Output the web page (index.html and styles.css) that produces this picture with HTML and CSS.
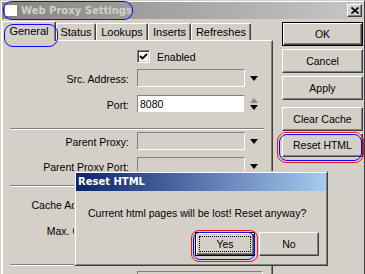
FILE: index.html
```html
<!DOCTYPE html>
<html lang="en">
<head>
    <meta charset="UTF-8">
    <meta name="viewport" content="width=device-width, initial-scale=1.0">
    <title>Web Proxy Settings</title>
    <link rel="stylesheet" href="styles.css">
</head>
<body>
    <div class="window">
        <div class="titlebar">
            <span class="app-icon"></span>
            <span class="title">Web Proxy Settings</span>
            <span class="mark blue mark-title"></span>
            <button class="close-btn">
                <svg width="8" height="7" viewBox="0 0 8 7"><path d="M0.5 0.5L7.5 6.5M7.5 0.5L0.5 6.5" stroke="#000" stroke-width="1.6"/></svg>
            </button>
        </div>

        <div class="main">
            <div class="tabs-area">
                <div class="tabs">
                    <div class="tab active">General<span class="mark blue mark-tab"></span></div>
                    <div class="tab tab-status">Status</div>
                    <div class="tab tab-lookups">Lookups</div>
                    <div class="tab tab-inserts">Inserts</div>
                    <div class="tab tab-refreshes">Refreshes</div>
                </div>

                <div class="panel">
                    <div class="row check-row">
                        <span class="checkbox">
                            <svg width="9" height="9" viewBox="0 0 9 9"><polyline points="1,4 3.5,6.5 8,2" fill="none" stroke="#000" stroke-width="1.8"/></svg>
                        </span>
                        <span class="check-label">Enabled</span>
                    </div>
                    <div class="row r-src">
                        <label>Src. Address:</label>
                        <div class="field"></div>
                        <span class="arrow"></span>
                    </div>
                    <div class="row r-port">
                        <label>Port:</label>
                        <div class="field white">8080</div>
                        <span class="spin"><span class="arrow up"></span><span class="arrow"></span></span>
                    </div>
                    <div class="sep s1"></div>
                    <div class="row r-parent">
                        <label>Parent Proxy:</label>
                        <div class="field"></div>
                        <span class="arrow"></span>
                    </div>
                    <div class="row r-pport">
                        <label>Parent Proxy Port:</label>
                        <div class="field"></div>
                        <span class="arrow"></span>
                    </div>
                    <div class="sep s2"></div>
                    <div class="row r-admin">
                        <label>Cache Administrator:</label>
                        <div class="field"></div>
                    </div>
                    <div class="row r-max">
                        <label>Max. Object Size:</label>
                        <div class="field"></div>
                        <span class="arrow"></span>
                    </div>
                    <div class="sep s3"></div>
                    <div class="row r-last">
                        <label></label>
                        <div class="field wide"></div>
                    </div>
                </div>
            </div>

            <div class="buttons">
                <button class="btn default b-ok">OK</button>
                <button class="btn b-cancel">Cancel</button>
                <button class="btn b-apply">Apply</button>
                <button class="btn b-clear">Clear Cache</button>
                <button class="btn b-reset">Reset HTML<span class="mark red mark-reset-r"></span><span class="mark blue mark-reset-b"></span></button>
            </div>
        </div>

        <div class="dialog">
            <div class="dialog-title">Reset HTML</div>
            <div class="dialog-msg">Current html pages will be lost! Reset anyway?</div>
            <div class="dialog-buttons">
                <button class="btn default focus d-btn">Yes<span class="mark red mark-yes-r"></span><span class="mark blue mark-yes-b"></span></button>
                <button class="btn d-btn">No</button>
            </div>
        </div>
    </div>
</body>
</html>
```

FILE: styles.css
```css
body {
    margin: 0;
    width: 365px;
    height: 274px;
    overflow: hidden;
    font-family: 'Liberation Sans', Arial, sans-serif;
    font-size: 10.5px;
    color: #000;
    background-color: #d4d0c8;
}

.window {
    position: relative;
    box-sizing: border-box;
    width: 365px;
    height: 274px;
    overflow: hidden;
    background-color: #d4d0c8;
    border: 1px solid #d4d0c8;
    border-right-color: #404040;
    border-bottom: none;
    box-shadow: inset 1px 1px #fff;
    padding: 1px 0 0 1px;
}

/* title bar */
.titlebar {
    position: relative;
    display: flex;
    align-items: center;
    height: 17px;
    width: 361px;
    background: linear-gradient(to right, #858585, #c6c6c6);
}

.app-icon {
    width: 12px;
    height: 11px;
    margin-left: 3px;
    background-color: #fff;
    border-right: 1px solid #808080;
    border-bottom: 1px solid #808080;
}

.title {
    margin-left: 3px;
    font-family: 'DejaVu Sans', Verdana, sans-serif;
    font-weight: bold;
    font-size: 10px;
    color: #d4d0c8;
}

.close-btn {
    display: flex;
    align-items: center;
    justify-content: center;
    width: 15px;
    height: 13px;
    margin-left: auto;
    margin-right: 1px;
    padding: 0;
    background-color: #d4d0c8;
    border: 1px solid;
    border-color: #fff #404040 #404040 #fff;
    box-shadow: inset -1px -1px #808080;
}

/* annotation rings */
.mark {
    position: absolute;
    box-sizing: border-box;
    pointer-events: none;
}

.mark.blue {
    border: 1px solid #0a0aff;
}

.mark.red {
    border: 1px solid #ff1010;
}

.mark-title {
    left: 1px;
    top: -1px;
    width: 130px;
    height: 19px;
    border-radius: 9px;
}

.mark-tab {
    left: 1px;
    top: 2px;
    width: 54px;
    height: 23px;
    border-radius: 9px;
}

.mark-reset-r {
    left: -6px;
    top: -2px;
    width: 87px;
    height: 31px;
    border-radius: 9px;
}

.mark-reset-b {
    left: -4px;
    top: 0;
    width: 83px;
    height: 27px;
    border-radius: 8px;
}

.mark-yes-r {
    left: -5px;
    top: -3px;
    width: 67px;
    height: 32px;
    border-radius: 8px;
}

.mark-yes-b {
    left: -3px;
    top: -1px;
    width: 62px;
    height: 28px;
    border-radius: 7px;
}

/* main area */
.main {
    display: flex;
}

.tabs-area {
    width: 271px;
}

.tabs {
    display: flex;
    align-items: flex-end;
    height: 21px;
}

.tab {
    box-sizing: border-box;
    height: 17px;
    font-size: 11px;
    line-height: 16px;
    text-align: center;
    border-top: 1px solid #fff;
    border-left: 1px solid #fff;
    border-right: 1px solid #404040;
    box-shadow: inset -1px 0 #808080;
    border-radius: 2px 2px 0 0;
}

.tab.active {
    position: relative;
    z-index: 1;
    width: 54px;
    height: 20px;
    margin-bottom: -1px;
    line-height: 18px;
    background-color: #d4d0c8;
}

.tab-status {
    width: 40px;
}

.tab-lookups {
    width: 52px;
}

.tab-inserts {
    width: 43px;
}

.tab-refreshes {
    width: 60px;
}

.panel {
    box-sizing: border-box;
    height: 260px;
    border-top: 1px solid #fff;
    border-left: 1px solid #fff;
    border-right: 1px solid #404040;
    box-shadow: inset -1px 0 #808080;
}

.row {
    display: flex;
    align-items: center;
    height: 18px;
}

.row label {
    width: 126px;
    margin-right: 8px;
    padding-top: 1px;
    text-align: right;
    white-space: nowrap;
}

.field {
    box-sizing: border-box;
    width: 108px;
    height: 18px;
    padding: 1px 0 0 2px;
    line-height: 15px;
    background-color: #d4d0c8;
    border: 1px solid;
    border-color: #808080 #fff #fff #808080;
}

.field.white {
    background-color: #fff;
    border-right-color: #d4d0c8;
    border-bottom-color: #d4d0c8;
}

.field.wide {
    width: 126px;
}

.arrow {
    width: 0;
    height: 0;
    margin-left: 5px;
    border-left: 4.5px solid transparent;
    border-right: 4.5px solid transparent;
    border-top: 5px solid #000;
}

.arrow.up {
    border-top: none;
    border-bottom: 5px solid #8c8c8c;
}

.spin {
    display: flex;
    flex-direction: column;
    gap: 2px;
}

.check-row {
    height: 13px;
    margin-top: 9px;
}

.checkbox {
    box-sizing: border-box;
    display: flex;
    align-items: center;
    justify-content: center;
    width: 13px;
    height: 13px;
    margin-left: 134px;
    background-color: #fff;
    border: 1px solid;
    border-color: #808080 #fff #fff #808080;
    box-shadow: inset 1px 1px #404040, inset -1px -1px #d4d0c8;
}

.check-label {
    margin-left: 7px;
}

.r-src { margin-top: 6px; }
.r-port { margin-top: 8px; }
.r-parent { margin-top: 2px; }
.r-pport { margin-top: 7px; }
.r-admin { margin-top: 8px; }
.r-max { margin-top: 8px; }
.r-last { margin-top: 5px; }

.sep {
    height: 0;
    margin: 0 8px 0 7px;
    border-top: 1px solid #808080;
    border-bottom: 1px solid #fff;
}

.s1 { margin-top: 15px; }
.s2 { margin-top: 10px; }
.s3 { margin-top: 25px; }

/* buttons */
.buttons {
    display: flex;
    flex-direction: column;
    width: 81px;
    margin-left: 9px;
    padding-top: 3px;
}

.btn {
    position: relative;
    box-sizing: border-box;
    height: 24px;
    padding: 0;
    font-family: 'Liberation Sans', Arial, sans-serif;
    font-size: 10.5px;
    color: #000;
    background-color: #d4d0c8;
    border: 1px solid;
    border-color: #fff #404040 #404040 #fff;
    box-shadow: inset -1px -1px #808080;
}

.btn.default {
    border: 1px solid #000;
    box-shadow: inset 1px 1px #fff, inset -1px -1px #404040, inset -2px -2px #808080;
}

.btn.focus {
    outline: 1px dotted #000;
    outline-offset: -5px;
}

.b-cancel { margin-top: 3px; }
.b-apply { margin-top: 3px; }
.b-clear { margin-top: 7px; }
.b-reset { margin-top: 2px; }

/* dialog */
.dialog {
    position: absolute;
    left: 73px;
    top: 170px;
    box-sizing: border-box;
    width: 254px;
    height: 95px;
    padding: 1px;
    background-color: #d4d0c8;
    border: 1px solid;
    border-color: #d4d0c8 #404040 #404040 #d4d0c8;
    box-shadow: inset 1px 1px #fff, inset -1px -1px #808080;
}

.dialog-title {
    height: 18px;
    padding-left: 2px;
    line-height: 18px;
    font-family: 'DejaVu Sans', Verdana, sans-serif;
    font-weight: bold;
    font-size: 10px;
    color: #fff;
    background: linear-gradient(to right, #0a246a, #a6caf0);
}

.dialog-msg {
    margin-top: 16px;
    padding-left: 12px;
    line-height: 13px;
}

.dialog-buttons {
    display: flex;
    justify-content: flex-end;
    gap: 4px;
    margin-top: 12px;
    padding-right: 7px;
}

.d-btn {
    width: 60px;
    height: 24px;
}
```
